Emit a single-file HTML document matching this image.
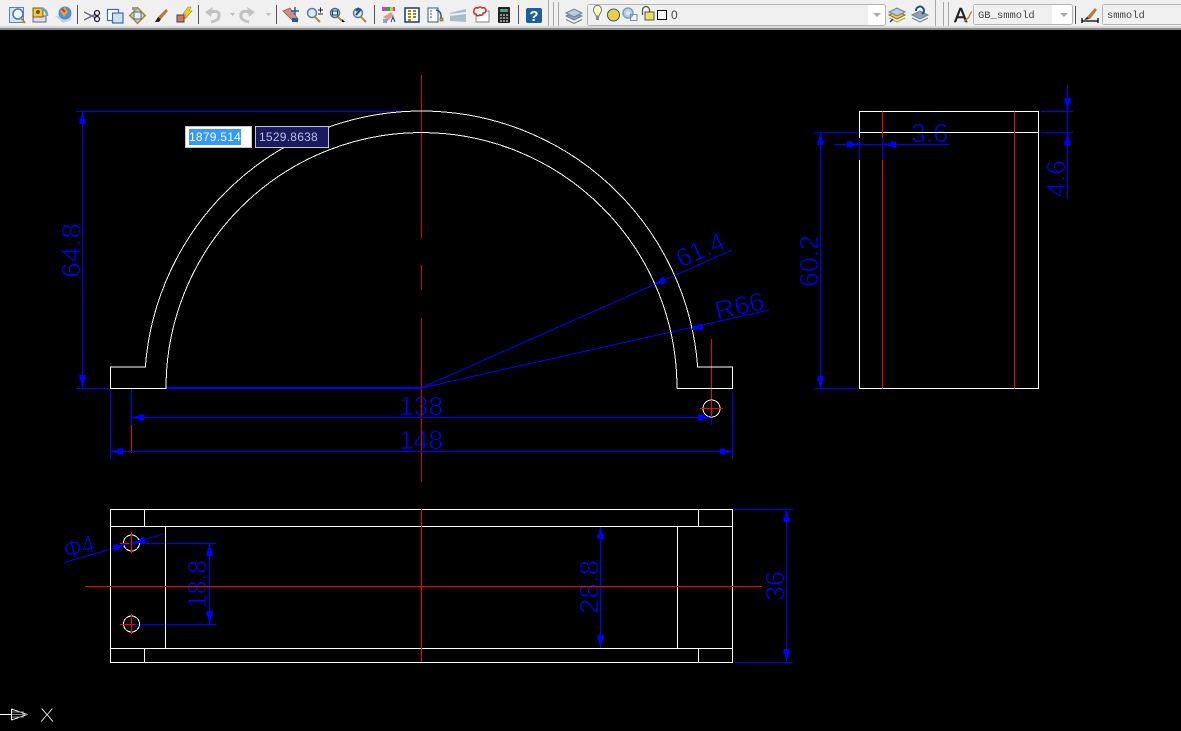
<!DOCTYPE html>
<html><head><meta charset="utf-8"><style>
html,body{margin:0;padding:0;background:#000;width:1181px;height:731px;overflow:hidden}
svg{position:absolute;left:0;top:0;display:block}
.d{font-family:"Liberation Sans",sans-serif;font-size:26px;fill:#00f;stroke:#000;stroke-width:.75px;paint-order:fill}
.b{position:absolute;top:126px;height:22px;box-sizing:border-box;border:1px solid #c4c4cc;font:12px/20px "Liberation Sans",sans-serif;letter-spacing:.25px}
</style></head><body>
<svg width="1181" height="731" viewBox="0 0 1181 731" xmlns="http://www.w3.org/2000/svg">
<defs>
<path id="a" d="M0,-1L-6,-1.500L-6,-3L-11,-3L-11,3L-6,3L-6,1.500L0,1Z" fill="#00f"/>
</defs>
<rect width="1181" height="731" fill="#000"/>

<!-- dimension text -->
<text class="d" transform="translate(80,278) rotate(-90)" textLength="55" lengthAdjust="spacingAndGlyphs">64.8</text>
<text class="d" x="399" y="415" textLength="44" lengthAdjust="spacingAndGlyphs">138</text>
<text class="d" x="399" y="449" textLength="44" lengthAdjust="spacingAndGlyphs">148</text>
<text class="d" transform="translate(681,268) rotate(-24)" textLength="50" lengthAdjust="spacingAndGlyphs">61.4</text>
<text class="d" transform="translate(717,320) rotate(-12.6)" textLength="50" lengthAdjust="spacingAndGlyphs">R66</text>
<text class="d" transform="translate(818,287) rotate(-90)" textLength="52" lengthAdjust="spacingAndGlyphs">60.2</text>
<text class="d" x="911" y="142" textLength="37" lengthAdjust="spacingAndGlyphs">3.6</text>
<text class="d" transform="translate(1065,197) rotate(-90)" textLength="37" lengthAdjust="spacingAndGlyphs">4.6</text>
<text class="d" transform="translate(206,608) rotate(-90)" textLength="48" lengthAdjust="spacingAndGlyphs">18.8</text>
<text class="d" transform="translate(598,614) rotate(-90)" textLength="54" lengthAdjust="spacingAndGlyphs">28.8</text>
<text class="d" transform="translate(784,601) rotate(-90)" textLength="30" lengthAdjust="spacingAndGlyphs">36</text>
<text class="d" style="font-size:25px" transform="translate(66,559) rotate(-14)" textLength="31" lengthAdjust="spacingAndGlyphs">Φ4</text>

<g shape-rendering="crispEdges" fill="none" stroke-width="1">
<!-- centre line -->
<path stroke="#e00000" d="M421.5,75V238M421.5,265V290M421.5,318V482M421.5,509V662"/>
<path stroke="#f00" d="M882.5,111V388M1014.5,111V388M85,586.5H762M131.5,425V453M711.5,339V417M700,408.5H723"/>
<!-- blue main -->
<path stroke="#00f" d="M76,111.5H410M82.5,111V388M76,388.5H110M165,388.5H421M165,387.5H421M131.5,389V425M110.5,391V459M732.5,391V459M131,417.5H711M110,451.5H733M711.5,417V425"/>
<path stroke="#00f" d="M421,388L732,250M421,388L769,310"/>
<!-- main profile -->
<path stroke="#fff" d="M145.3,367H110.5V388.5H166L166,388A255.5,255.5 0 0 1 677,388L677.500,388.5H732.5V367H697.7A277,277 0 0 0 145.3,367Z"/>
<circle cx="711.5" cy="408.5" r="8.5" stroke="#fff"/>
<path stroke="#f00" d="M700,408.5H723M711.5,400V417"/>
<!-- right view -->
<path stroke="#00f" d="M814,132.5H858M814,388.5H858M820.5,132V388M834,144.5H949.5M859.5,138V160M882.5,138V160M1041,111.5H1073M1041,132.5H1073M1067.5,85V199"/>
<path stroke="#fff" d="M859.5,160V388.5H1038.5V111.5H859.5V138M859.5,132.5H1038.5"/>
<path stroke="#f00" d="M882.5,111.5V138M882.5,160V388.5M1014.5,111.5V388.5"/>
<!-- bottom view -->
<path stroke="#00f" d="M735,509.5H793M735,662.5H793M786.5,509V662M600.5,526V648M594,526.5H601M594,648.5H601M131,543.5H216M135,624.5H216M209.5,543V624M64,562.5L163.5,534"/>
<path stroke="#fff" d="M110.5,509.5H732.5V662.5H110.5ZM110.5,526.5H732.5M110.5,648.5H732.5M144.5,509.5V526.5M144.5,648.5V662.5M165.5,526.5V648.5M698.5,509.5V526.5M698.5,648.5V662.5M677.5,526.5V648.5"/>
<path stroke="#f00" d="M85,586.5H762M421.5,509V662"/>
<circle cx="131.5" cy="543" r="8" stroke="#fff"/>
<circle cx="131.5" cy="624" r="8" stroke="#fff"/>
<path stroke="#f00" d="M120,543.5H129M131.5,532V553M120,624.5H135M131.5,614V634"/>
<!-- arrows -->
<use href="#a" transform="translate(82.5,113) rotate(-90)"/>
<use href="#a" transform="translate(82.5,386) rotate(90)"/>
<use href="#a" transform="translate(133,417.5) rotate(180)"/>
<use href="#a" transform="translate(112,451.5) rotate(180)"/>
<use href="#a" transform="translate(709,417.5)"/>
<use href="#a" transform="translate(731,451.5)"/>
<use href="#a" transform="translate(655,284) rotate(156)"/>
<use href="#a" transform="translate(692,329) rotate(167.4)"/>
<use href="#a" transform="translate(820.5,134) rotate(-90)"/>
<use href="#a" transform="translate(820.5,387) rotate(90)"/>
<use href="#a" transform="translate(858,144.5)"/>
<use href="#a" transform="translate(885,144.5) rotate(180)"/>
<use href="#a" transform="translate(1067.5,109) rotate(90)"/>
<use href="#a" transform="translate(1067.5,134.5) rotate(-90)"/>
<use href="#a" transform="translate(209.5,545) rotate(-90)"/>
<use href="#a" transform="translate(209.5,622) rotate(90)"/>
<use href="#a" transform="translate(600.5,528) rotate(-90)"/>
<use href="#a" transform="translate(600.5,646) rotate(90)"/>
<use href="#a" transform="translate(786.5,511) rotate(-90)"/>
<use href="#a" transform="translate(786.5,660) rotate(90)"/>
<use href="#a" transform="translate(124,545) rotate(-16)"/>
<use href="#a" transform="translate(134,543) rotate(164)"/>
<!-- UCS icon -->
<path stroke="#fff" d="M0,714.5H11M11.5,709V720M11.5,709L27,714.5L11.5,720"/>
<path stroke="#888" d="M12,712H24M12,717H24M12,714.5H28"/>
</g>
<text x="39" y="722" style="font:20px 'Liberation Sans',sans-serif;fill:#fff;stroke:#000;stroke-width:.9px" textLength="16" lengthAdjust="spacingAndGlyphs">X</text>

<!-- TOOLBAR -->
<rect width="1181" height="26" fill="#f0f0f0"/>
<rect y="26" width="1181" height="2" fill="#d8d8d8"/>
<rect y="28" width="1181" height="2" fill="#8a8a8a"/>
<!-- separators -->
<path stroke="#555" d="M77.5,5V24M198.5,5V24M276.5,5V24M374.5,5V24M518.5,5V24M1075.5,6V24" shape-rendering="crispEdges"/>
<path stroke="#a8a8a8" fill="none" d="M548.5,0V26M553.5,2V26M558.5,2V26M935.5,0V26M943.5,2V26M948.5,2V26" shape-rendering="crispEdges"/>
<g fill="none">
<!-- preview -->
<rect x="9.500" y="7.500" width="14" height="15" fill="#d4e4f0" stroke="#5a86ae"/><circle cx="18" cy="14" r="5" fill="#eef6fb" stroke="#4f7ba3" stroke-width="1.500"/><path d="M21,18l4,5" stroke="#b58a38" stroke-width="2"/>
<!-- publish -->
<rect x="33" y="16" width="13" height="6" fill="#dde" stroke="#667"/><rect x="33" y="8" width="10" height="9" fill="#f2c83a" stroke="#7a5a10"/><circle cx="38" cy="12" r="2" fill="#7a5a10"/><path d="M41,9q6,0 6,7" stroke="#6f9fc8" stroke-width="2.500"/>
<!-- globe -->
<path d="M55,16l8,7l8,-3v-5z" fill="#c9d2dc"/><circle cx="65" cy="13" r="6.500" fill="#4d8fd0"/><path d="M60,11l5,-4l3,5l-4,5z" fill="#e9a23a"/><path d="M62,9l3,3" stroke="#c33" stroke-width="2"/>
<!-- cut -->
<path d="M84,12l12,6M84,20l12,-6" stroke="#667" stroke-width="1.300"/><circle cx="97" cy="13" r="2.500" stroke="#223" stroke-width="1.300"/><circle cx="97" cy="19" r="2.500" stroke="#223" stroke-width="1.300"/>
<!-- copy -->
<rect x="107.500" y="9.500" width="11" height="11" fill="#fff" stroke="#3d6ea5" stroke-width="1.200"/><rect x="112.500" y="13" width="10.500" height="10" fill="#cfe0ef" stroke="#3d6ea5" stroke-width="1.200"/>
<!-- paste -->
<rect x="132" y="10" width="11" height="11" transform="rotate(45 137.500 15.500)" fill="#b9d0e2" stroke="#a88a30" stroke-width="1.500"/><rect x="134" y="12" width="7" height="7" fill="#e6eef5" stroke="#667"/><rect x="132" y="7" width="5" height="3" fill="#999"/>
<!-- brush -->
<path d="M155,22l3,-5l3,2l-2,3z" fill="#222"/><path d="M158,17l8,-8l2,2l-7,8z" fill="#b8793c"/>
<!-- match -->
<rect x="177" y="15" width="7" height="7" fill="#e8723a" stroke="#1c4a8a"/><path d="M188,7l-5,7h3l-2,6l8,-9h-3l2,-4z" fill="#f2d020" stroke="#a88a10" stroke-width=".6"/>
<!-- undo / redo -->
<path d="M211,22c5,-1 9,-3 8,-8c-.5,-3 -5,-3 -8,-2" stroke="#c2c2c2" stroke-width="3"/><path d="M213,7l-8,5l6,5z" fill="#c2c2c2"/>
<path d="M230,13h5l-2.500,3z" fill="#bbb"/>
<path d="M249,22c-5,-1 -9,-3 -8,-8c.5,-3 5,-3 8,-2" stroke="#c2c2c2" stroke-width="3"/><path d="M247,7l8,5l-6,5z" fill="#c2c2c2"/>
<path d="M266,13h5l-2.500,3z" fill="#bbb"/>
<!-- pan -->
<path d="M283,11l10,10l4,1l1,-3l-8,-11z" fill="#c98f86" stroke="#8a5a5a" stroke-width=".7"/><rect x="292" y="18" width="6" height="4" fill="#2a5a92"/><path d="M295,7v8M291,11h8" stroke="#2a5a92" stroke-width="1.500"/>
<!-- zoom -->
<circle cx="312" cy="13" r="4.500" fill="#dcebf6" stroke="#5a7f9e" stroke-width="1.500"/><path d="M315,17l5,5" stroke="#b58a38" stroke-width="2"/><path d="M318,10h5M320.500,7.500v5M318,14h5" stroke="#222"/>
<circle cx="335" cy="13" r="4.500" fill="#dcebf6" stroke="#4a6a86" stroke-width="1.500"/><rect x="332.500" y="11" width="5" height="4" stroke="#1c3a5a"/><path d="M338,17l4,4" stroke="#b58a38" stroke-width="2"/><path d="M342,19l3,3h-3z" fill="#000"/>
<circle cx="358" cy="13" r="4.500" fill="#dcebf6" stroke="#5a7f9e" stroke-width="1.500"/><path d="M356,15l5,-6M356,11l3,-3" stroke="#1c4a8a" stroke-width="2"/><path d="M361,17l5,5" stroke="#b58a38" stroke-width="2"/>
<!-- tool palette etc -->
<rect x="382" y="7" width="13" height="4" fill="#d040c0"/><rect x="386" y="7" width="4" height="4" fill="#20b040"/><rect x="390" y="7" width="3" height="4" fill="#e8c020"/><path d="M383,17l8,-5l3,4l-6,4z" fill="#d8a090"/><path d="M383,20h5M383,22h4" stroke="#2a5a92"/><path d="M391,22l2,-5l2,5" stroke="#2a3a5a"/>
<rect x="405" y="8" width="14" height="14" fill="#fff" stroke="#1c3a6a" stroke-width="1.500"/><path d="M408,11h3M413,11h3M408,14h3M413,14h3M408,17h3M413,17h3M408,20h3" stroke="#9a8a10" stroke-width="2"/>
<rect x="428" y="8" width="10" height="14" fill="#fff" stroke="#2a5a92"/><path d="M430,11h2M430,14h2M430,17h2" stroke="#2a5a92"/><path d="M436,10q6,1 5,9" stroke="#2a5a92" stroke-width="1.500"/><rect x="440" y="18" width="3" height="3" fill="#e0b010" stroke="#333" stroke-width=".5"/>
<path d="M450,13l16,-4v13l-16,-1z" fill="#a9bcc8"/><path d="M450,15l16,-2" stroke="#eef" stroke-width="2"/>
<rect x="476" y="11" width="13" height="11" fill="#fff" stroke="#888"/><path d="M474,10q1,-3 4,-2q2,-2 4,0q3,-1 4,2q0,3 -3,3q0,3 -3,2q-3,2 -4,-1q-3,0 -2,-4z" fill="#fff" stroke="#e02020" stroke-width="1.500"/>
<rect x="498" y="7" width="12" height="16" fill="#222" rx="1"/><rect x="500" y="9" width="8" height="3" fill="#5f9a80"/><path d="M500,15h2M503,15h2M506,15h2M500,18h2M503,18h2M506,18h2M500,21h2M503,21h2M506,21h2" stroke="#fff"/>
<!-- help -->
<rect x="526" y="8" width="16" height="15" rx="2" fill="#1f5f99"/>
</g>
<text x="534" y="21" text-anchor="middle" style="font:bold 15px 'Liberation Sans',sans-serif;fill:#fff">?</text>
<g fill="none">
<!-- layers icon -->
<path d="M566,16l8,-4l8,4l-8,4z" fill="#8fa3b5" stroke="#6b8093"/><path d="M566,13l8,-4l8,4l-8,4z" fill="#bccbd8" stroke="#6b8093"/><path d="M566,19.500l8,4l8,-4" stroke="#6b8093"/>
<!-- layer control -->
<rect x="587.500" y="4.500" width="298" height="21" rx="2" fill="#fff" stroke="#b4b4b4"/><rect x="588" y="5" width="280" height="20" fill="#f0f0f0"/>
<path d="M594,12a4,4.500 0 1 1 7,0c-1,2 -2,3 -2,4h-3c0,-1 -1,-2 -2,-4z" fill="#ffffc0" stroke="#777"/><rect x="596" y="16" width="3" height="4" fill="#888"/>
<circle cx="613.500" cy="15" r="6" fill="#f0d040" stroke="#2a5a92"/>
<circle cx="628" cy="13" r="5" fill="#b8cfe0" stroke="#7fa0bf" stroke-width="1.500"/><circle cx="628" cy="13" r="2" fill="#e0e8f0"/><rect x="630.500" y="14.500" width="6.500" height="6" stroke="#6f94b4"/>
<path d="M642.500,15v-5a3.500,3.500 0 0 1 7,0v2" stroke="#555" stroke-width="1.300"/><rect x="645" y="12" width="9" height="8" fill="#e8e060" stroke="#555"/>
<rect x="657.500" y="10.500" width="9" height="9" fill="#fff" stroke="#000"/>
</g>
<text x="671" y="19" style="font:12px 'Liberation Sans',sans-serif;fill:#444">0</text>
<path d="M873,13h8l-4,4z" fill="#aaa"/>
<g fill="none">
<path d="M889,15l8,-4l8,4l-8,4z" fill="#f0d040" stroke="#807020"/><path d="M889,12l8,-4l8,4l-8,4z" fill="#bccbd8" stroke="#6b8093"/><path d="M889,18l8,4l8,-4" stroke="#c0a020"/><path d="M890,22l3,-3" stroke="#1c4a8a" stroke-width="1.500"/>
<path d="M912,15l8,-4l8,4l-8,4z" fill="#8fa3b5" stroke="#6b8093"/><path d="M912,18l8,4l8,-4" stroke="#6b8093"/><path d="M916,11a4,4 0 1 1 6,3" stroke="#1c4a8a" stroke-width="2"/>
</g>
<!-- text style -->
<text x="954" y="22" style="font:20px 'Liberation Sans',sans-serif;fill:#222;stroke:#222;stroke-width:.4px">A</text>
<path d="M963,22l3,-3l2,-2l3,-6l1,1l-3,6l-3,3z" fill="#b8793c"/>
<rect x="973.500" y="4.500" width="99" height="20" rx="2" fill="#fff" stroke="#b4b4b4"/><rect x="974" y="5" width="78" height="19" fill="#f0f0f0"/>
<text x="978" y="18" style="font:10.500px 'Liberation Mono',monospace;fill:#444">GB_smmold</text>
<path d="M1060,13h8l-4,4z" fill="#aaa"/>
<!-- dim style -->
<path d="M1082,21h16M1082,18v5M1098,18v5" stroke="#000" stroke-width="1.300" fill="none"/><path d="M1086,18l9,-10l2,2l-7,9z" fill="#b8793c"/><path d="M1084,20l3,-3l2,2z" fill="#222"/>
<rect x="1102.500" y="4.500" width="90" height="20" rx="2" fill="#fff" stroke="#b4b4b4"/><rect x="1103" y="5" width="78" height="19" fill="#f0f0f0"/>
<text x="1107" y="18" style="font:10.500px 'Liberation Mono',monospace;fill:#444">smmold</text>
</svg>
<div class="b" style="left:185px;width:67px;background:#fff;padding-left:3px"><span style="background:#3399ff;color:#fff;display:inline-block;height:16px;line-height:16px;margin-top:2px;vertical-align:top">1879.514</span></div>
<div class="b" style="left:255px;width:74px;background:#1a1a5e;color:#b9c0e0;padding-left:3px">1529.8638</div>
</body></html>
